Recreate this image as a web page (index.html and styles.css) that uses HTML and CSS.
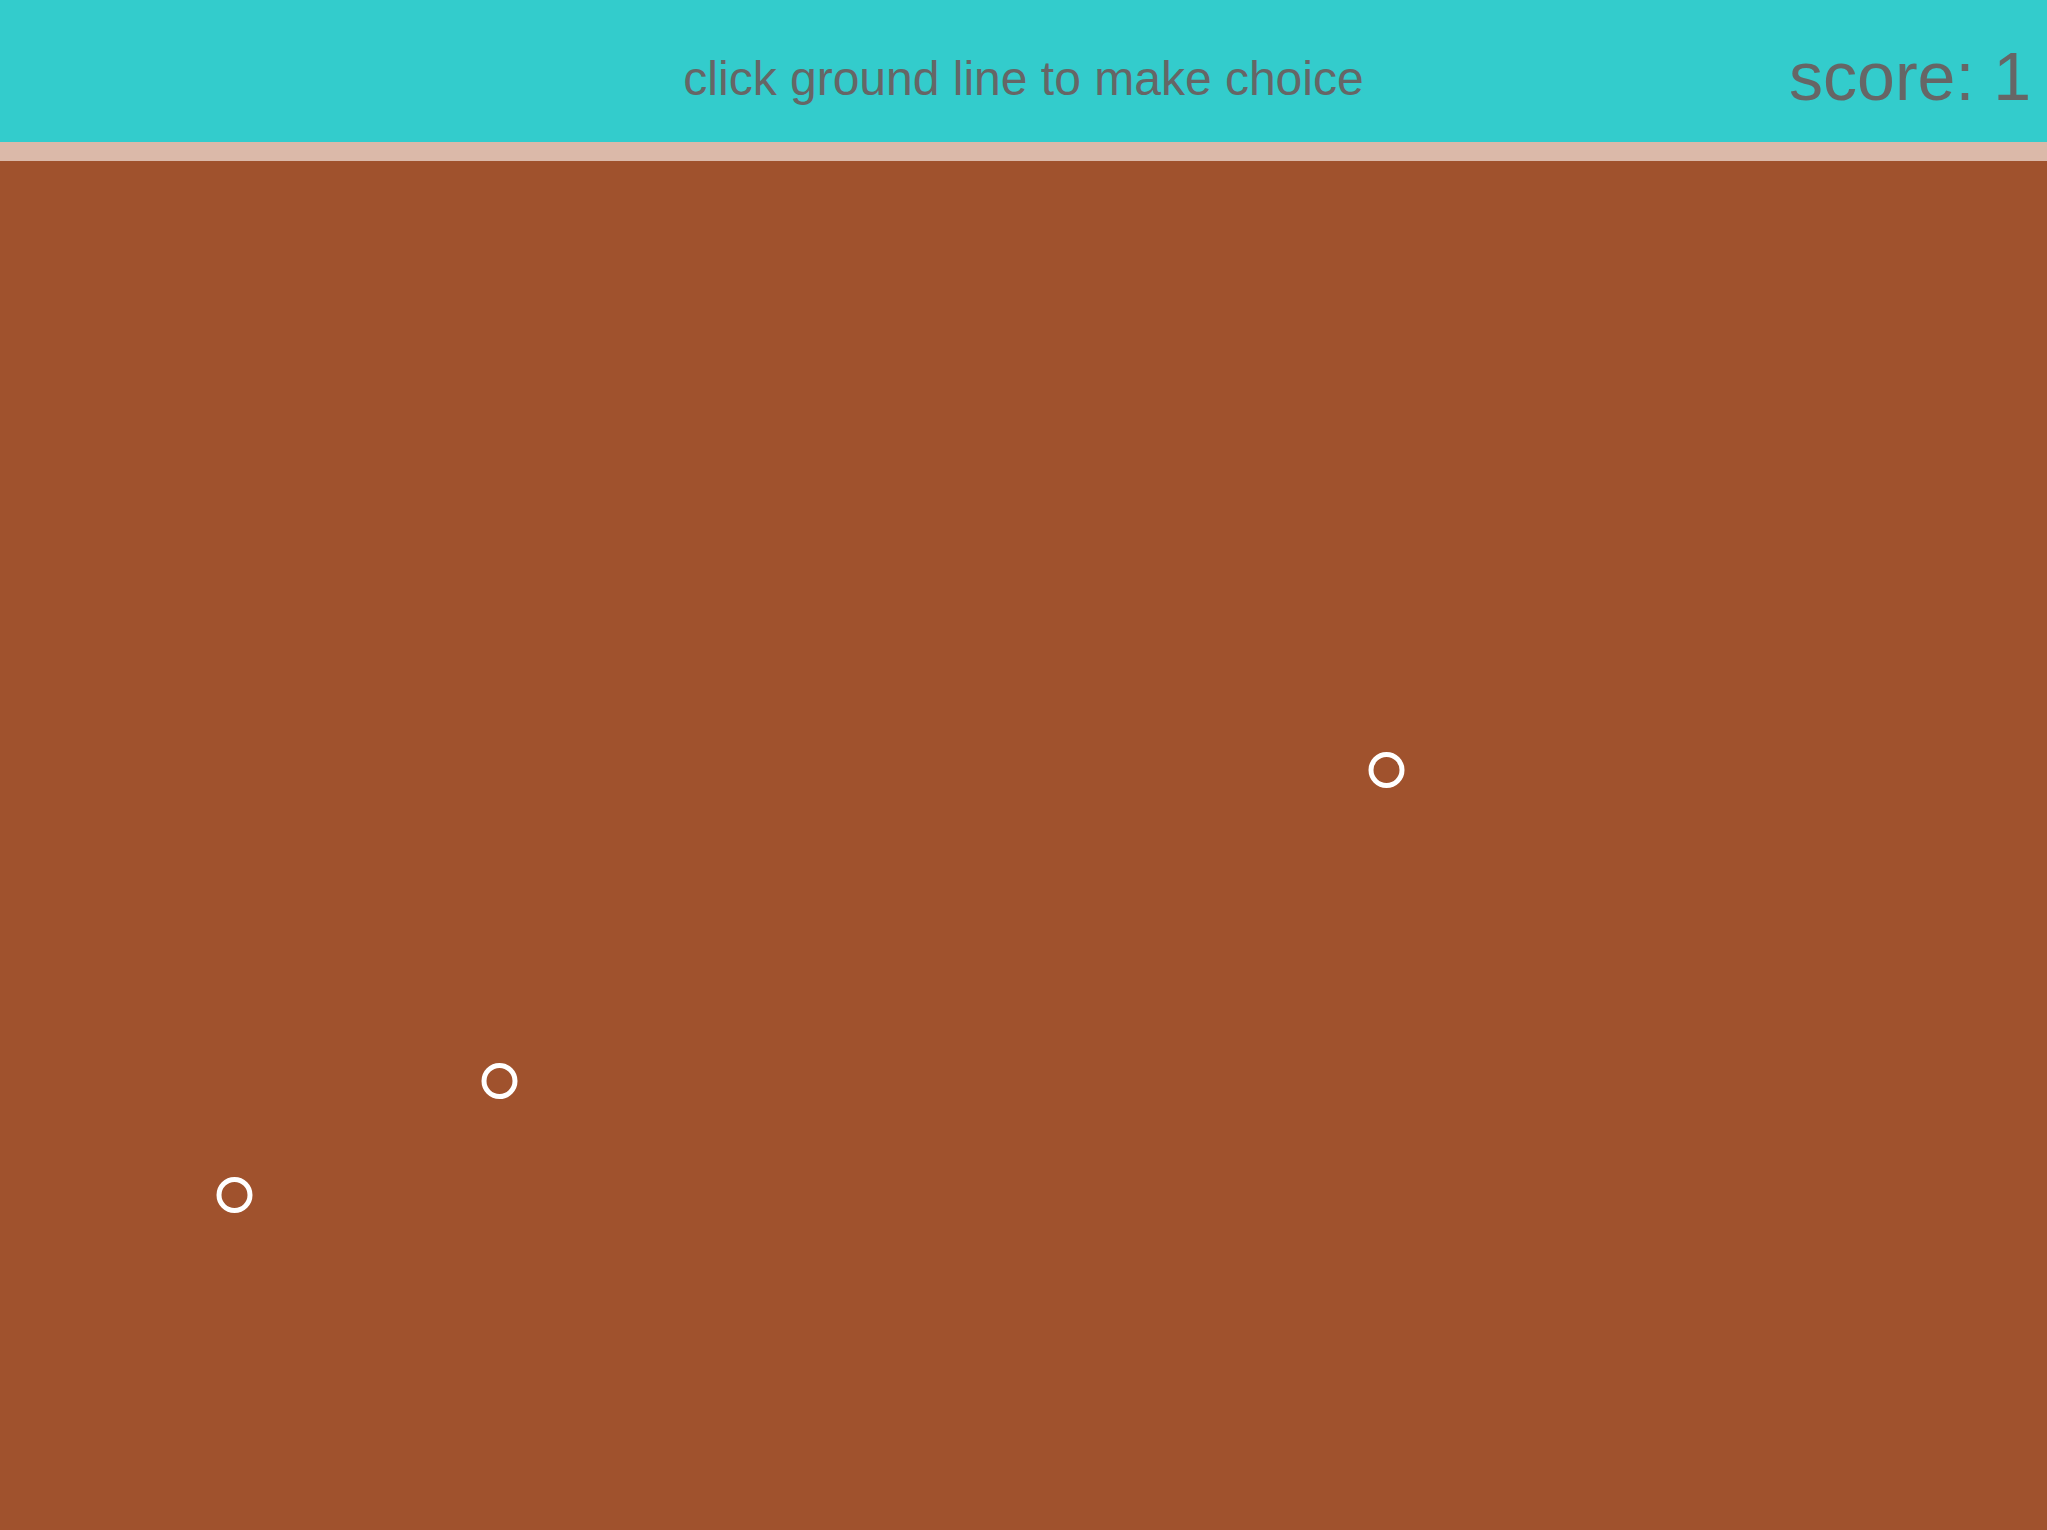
FILE: index.html
```html
<!DOCTYPE html>
<html>
<head>
<meta charset="utf-8">
<link rel="stylesheet" href="styles.css">
</head>
<body>
<div class="header">
  <div class="spacer"></div>
  <div class="prompt">click ground line to make choice</div>
  <div class="score">score: 1</div>
</div>
<div class="ground-line"></div>
<div class="field">
  <svg class="canvas" width="2047" height="1369" viewBox="0 0 2047 1369">
    <circle cx="1386.5" cy="609" r="15.5" fill="none" stroke="#ffffff" stroke-width="5"/>
    <circle cx="499.5" cy="920" r="15.5" fill="none" stroke="#ffffff" stroke-width="5"/>
    <circle cx="234.5" cy="1034" r="15.5" fill="none" stroke="#ffffff" stroke-width="5"/>
  </svg>
</div>
</body>
</html>
```
FILE: styles.css
```css
html, body {
  margin: 0;
  padding: 0;
  background: #a0522d;
  overflow: hidden;
}
.header {
  height: 142px;
  background: #33cccc;
  display: grid;
  grid-template-columns: 1fr auto 1fr;
  align-items: start;
  font-family: "Liberation Sans", Arial, sans-serif;
  color: #666666;
  line-height: 1;
}
.prompt {
  font-size: 48px;
  padding-top: 55px;
}
.score {
  justify-self: end;
  font-size: 68px;
  padding-top: 42px;
  padding-right: 16px;
}
.ground-line {
  height: 19px;
  background: #dbb9a9;
}
.field {
  height: 1369px;
  background: #a0522d;
}
.canvas {
  display: block;
}
```
